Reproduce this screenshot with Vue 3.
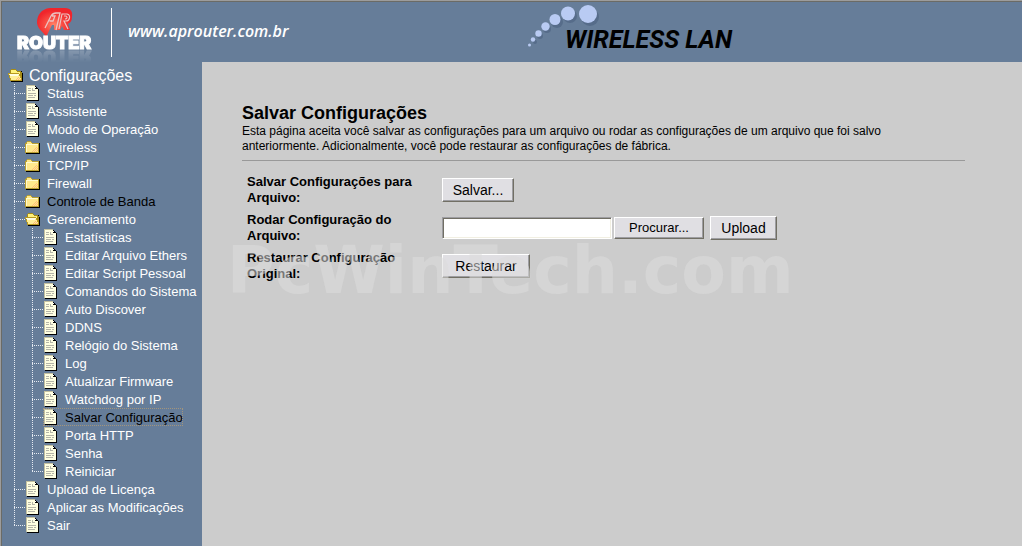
<script setup>
const children = [
  { label: 'Estatísticas' },
  { label: 'Editar Arquivo Ethers' },
  { label: 'Editar Script Pessoal' },
  { label: 'Comandos do Sistema' },
  { label: 'Auto Discover' },
  { label: 'DDNS' },
  { label: 'Relógio do Sistema' },
  { label: 'Log' },
  { label: 'Atualizar Firmware' },
  { label: 'Watchdog por IP' },
  { label: 'Salvar Configuração', current: true },
  { label: 'Porta HTTP' },
  { label: 'Senha' },
  { label: 'Reiniciar' },
]

const tree = [
  { label: 'Status', icon: 'doc' },
  { label: 'Assistente', icon: 'doc' },
  { label: 'Modo de Operação', icon: 'doc' },
  { label: 'Wireless', icon: 'folder' },
  { label: 'TCP/IP', icon: 'folder' },
  { label: 'Firewall', icon: 'folder' },
  { label: 'Controle de Banda', icon: 'folder', dark: true },
  { label: 'Gerenciamento', icon: 'open', children },
  { label: 'Upload de Licença', icon: 'doc' },
  { label: 'Aplicar as Modificações', icon: 'doc' },
  { label: 'Sair', icon: 'doc' },
]
</script>

<template>
  <div class="page">
    <svg class="defs" aria-hidden="true">
      <symbol id="doc" viewBox="0 0 15 16" shape-rendering="crispEdges">
        <path d="M2 1h9v1h1v1h1v1h1v12H2z" fill="#000" />
        <path d="M1 0h9v4h3v11H1z" fill="#ffffe1" />
        <path d="M1 0h9v1H2v14H1z" fill="#c4c1a0" />
        <path d="M10 1h1v1h1v1h1v1h-3z" fill="#000" />
        <path d="M10 2h1v1h-1z" fill="#fff" />
        <path d="M3 3h3v1H3zM3 5h3v1H3zM7 3h1v3H7zM8 5h2v1H8zM3 8h8v1H3zM3 10h5v1H3zM9 10h2v1H9zM3 12h7v1H3z" fill="#b5b5a8" />
      </symbol>
      <symbol id="folder" viewBox="0 0 15 13" shape-rendering="crispEdges">
        <path d="M2 2h13v11H1v-1h1z" fill="#000" />
        <path d="M1 1h1V0h4v1h1v1h7v10H0V2h1z" fill="#b99f31" />
        <path d="M2 1h4v1h1v1h6v8H1V3h1z" fill="#ffe98c" />
        <path d="M1 3h12v1H1zM1 3h1v8H1z" fill="#fffbcf" />
        <path d="M11 6h1v1h-1zM9 8h1v1H9zM11 8h1v1h-1zM7 10h1v1H7zM9 10h1v1H9zM11 10h1v1h-1zM10 7h1v1h-1zM12 7h1v1h-1zM8 9h1v1H8zM10 9h1v1h-1zM12 9h1v1h-1z" fill="#ffc07a" />
      </symbol>
      <symbol id="open" viewBox="0 0 15 13" shape-rendering="crispEdges">
        <path d="M3 2h11v2h1v9H3v-1h1z" fill="#000" />
        <path d="M2 1h1V0h5v1h1v1h4v1h1v9H3V9H2z" fill="#a58b18" />
        <path d="M3 1h5v1h1v1h3v2H3z" fill="#fff27c" />
        <path d="M0 4h11v1h1v2h1v2h1v3H2V9H1V6H0z" fill="#b89a20" />
        <path d="M1 5h10v2h1v2h1v2H3V9H2V6H1z" fill="#ffef98" />
        <path d="M1 5h10v1H1zM2 6h8v1H2z" fill="#fffde0" />
        <path d="M10 8h1v1h-1zM9 9h1v1H9zM11 9h1v1h-1zM8 10h1v1H8zM10 10h1v1h-1zM12 10h1v1h-1z" fill="#ffb978" />
      </symbol>
    </svg>

    <header class="banner">
      <a class="brand" href="#" aria-label="AP Router">
        <svg class="mark" viewBox="0 0 36 30" aria-hidden="true">
          <defs>
            <radialGradient id="glow" cx="48%" cy="58%" r="50%">
              <stop offset="0" stop-color="#ff8468" />
              <stop offset="0.5" stop-color="#f94c42" />
              <stop offset="1" stop-color="#f0252b" />
            </radialGradient>
          </defs>
          <path d="M9 29C7 24 1 22 0 15C0 7 4 1 13 0H28C34 0 36 4 35 9C35 13 33 15 31 16L33 22H27L25 18L23 22H17V17H15L12 23Z" fill="url(#glow)" />
          <path d="M8 20L14 8Q16 5 19 5H23L19 22M15 8L18 8L16 13H12.500" fill="none" stroke="#ecc3c2" stroke-width="1.300" />
          <path d="M22 21L25 6H30C34 7 33 13 29 13H27L31 21M27 8H29C31 9 30 11 28 11" fill="none" stroke="#ecc3c2" stroke-width="1.200" />
        </svg>
        <span class="wordmark">ROUTER</span>
      </a>
      <a class="site" href="#">www.aprouter.com.br</a>
      <div class="product">
        <svg class="bubbles" viewBox="0 0 80 52" aria-hidden="true">
          <g fill="#3f5474" opacity="0.4">
            <circle cx="63" cy="17" r="9" /><circle cx="43" cy="16" r="7" /><circle cx="30" cy="22" r="6" />
            <circle cx="20" cy="29" r="4" /><circle cx="13" cy="36" r="3" /><circle cx="8" cy="42" r="2" />
          </g>
          <g fill="#b9cbf3">
            <circle cx="61" cy="14" r="9" /><circle cx="41" cy="13.500" r="7" /><circle cx="28" cy="19.500" r="5.500" />
            <circle cx="18.500" cy="26.500" r="4.200" /><circle cx="11.500" cy="33.500" r="3.200" /><circle cx="6" cy="39.500" r="2.200" /><circle cx="2.500" cy="45" r="1.500" />
          </g>
        </svg>
        <span class="product-name">WIRELESS LAN</span>
      </div>
    </header>

    <div class="body">
      <nav class="side" aria-label="Configurações">
        <a class="root" href="#">
          <svg class="glyph" aria-hidden="true"><use href="#open" /></svg>Configurações
        </a>
        <ul class="tree">
          <li v-for="item in tree" :key="item.label">
            <a class="node" :class="{ dark: item.dark }" href="#">
              <svg class="glyph" :class="item.icon" aria-hidden="true"><use :href="'#' + item.icon" /></svg>
              <span>{{ item.label }}</span>
            </a>
            <ul v-if="item.children" class="tree nested">
              <li v-for="child in item.children" :key="child.label">
                <a class="node" :class="{ dark: child.current, current: child.current }" href="#">
                  <svg class="glyph doc" aria-hidden="true"><use href="#doc" /></svg>
                  <span>{{ child.label }}</span>
                </a>
              </li>
            </ul>
          </li>
        </ul>
      </nav>

      <main class="main">
        <h1>Salvar Configurações</h1>
        <p>Esta página aceita você salvar as configurações para um arquivo ou rodar as configurações de um arquivo que foi salvo anteriormente. Adicionalmente, você pode restaurar as configurações de fábrica.</p>
        <hr />
        <form class="actions" @submit.prevent>
          <div class="row">
            <span id="save-label" class="label">Salvar Configurações para Arquivo:</span>
            <button type="button" class="save" aria-describedby="save-label">Salvar...</button>
          </div>
          <div class="row">
            <label class="label" for="config-file">Rodar Configuração do Arquivo:</label>
            <div class="picker">
              <input id="config-file" type="text" />
              <button type="button" class="browse">Procurar...</button>
            </div>
            <button type="button" class="upload">Upload</button>
          </div>
          <div class="row">
            <span id="reset-label" class="label">Restaurar Configuração Original:</span>
            <button type="button" class="reset" aria-describedby="reset-label">Restaurar</button>
          </div>
        </form>
        <div class="watermark">PcWinTech.com</div>
      </main>
    </div>
  </div>
</template>

<style>
body {
  background: #ccc;
}
</style>

<style scoped>
.page {
  min-height: 100vh;
  box-sizing: border-box;
  display: flex;
  flex-direction: column;
  border-top: 1px solid #9c9c9c;
  border-left: 1px solid #9c9c9c;
  background: #ccc;
  color: #000;
  font-family: "Liberation Sans", Arial, sans-serif;
  font-size: 13px;
}
.defs {
  position: absolute;
  width: 0;
  height: 0;
}
a {
  color: #fff;
  text-decoration: none;
}
.banner {
  display: flex;
  align-items: flex-start;
  height: 60px;
  border-top: 1px solid #6b6b66;
  border-left: 1px solid #6b6b66;
  background: #667d99;
}
.brand {
  display: flex;
  flex-direction: column;
  width: 94px;
  height: 49px;
  margin-top: 6px;
  padding-left: 15px;
  border-right: 1px solid #fff;
}
.mark {
  width: 36px;
  height: 30px;
  margin-left: 20px;
}
.wordmark {
  margin-top: -4px;
  height: 18px;
  font: 900 18px/18px Inter, "Liberation Sans", sans-serif;
  -webkit-text-stroke: 1px #fff;
  -webkit-box-reflect: below -4px linear-gradient(transparent 20%, rgba(255, 255, 255, 0.25));
}
.site {
  margin: 18px 0 0 16px;
  width: 162px;
  font: italic 600 16px/22px "Open Sans", sans-serif;
  white-space: nowrap;
}
.product {
  display: flex;
  align-items: flex-start;
  margin-left: 237px;
}
.bubbles {
  width: 80px;
  height: 52px;
  margin-top: -2px;
}
.product-name {
  margin: 24px 0 0 -42px;
  z-index: 1;
  color: #000;
  font: italic 700 25px/28px Roboto, sans-serif;
  white-space: nowrap;
}
.body {
  flex: 1;
  display: flex;
}
.side {
  flex: none;
  width: 201px;
  box-sizing: border-box;
  border-left: 1px solid #6b6b66;
  padding-top: 5px;
  background: #667d99;
}
.root {
  display: flex;
  align-items: center;
  gap: 6px;
  height: 17px;
  padding-left: 6px;
  font-size: 16px;
}
.glyph {
  flex: none;
  width: 15px;
  height: 13px;
}
.glyph.doc {
  height: 16px;
}
.tree {
  list-style: none;
  margin: 0 0 0 12px;
  padding: 0;
}
.tree.nested {
  margin-left: 18px;
}
.tree li {
  background-image:
    repeating-linear-gradient(to bottom, #e6ebf2 0 1px, transparent 1px 2px),
    repeating-linear-gradient(to right, #e6ebf2 0 1px, transparent 1px 2px);
  background-repeat: no-repeat;
  background-size: 1px 100%, 11px 1px;
  background-position: 0 0, 0 9px;
}
.tree li:last-child {
  background-size: 1px 10px, 11px 1px;
}
.node {
  display: flex;
  align-items: center;
  gap: 7px;
  width: max-content;
  height: 18px;
  margin-left: 11px;
  white-space: nowrap;
}
.dark {
  color: #000;
}
.current {
  outline: 1px dotted #a3957c;
  outline-offset: -1px;
}
.main {
  flex: 1;
  min-width: 0;
  position: relative;
  padding: 41px 57px 40px 40px;
}
h1 {
  margin: 0;
  font-size: 18px;
  line-height: 21px;
}
p {
  max-width: 660px;
  margin: 0;
  font-size: 12px;
  line-height: 15px;
}
hr {
  margin: 6px 0 10px;
  border: 0;
  border-top: 1px solid #999;
}
.row {
  display: flex;
  align-items: center;
  height: 38px;
}
.label {
  width: 175px;
  margin: 0 20px 0 5px;
  font-weight: 700;
  line-height: 16px;
}
.picker {
  display: flex;
  gap: 2px;
  margin-right: 6px;
}
button {
  height: 24px;
  padding: 0;
  border: 1px solid;
  border-color: #fff #716f64 #716f64 #fff;
  border-radius: 0;
  box-shadow: inset -1px -1px #9d9da1;
  background: #e0dfe3;
  color: #000;
  font: 14px/20px "Liberation Sans", Arial, sans-serif;
}
.save {
  width: 72px;
}
.reset {
  width: 88px;
}
.upload {
  width: 67px;
}
.browse {
  width: 90px;
  height: 22px;
  font-size: 13px;
}
input {
  width: 170px;
  height: 22px;
  box-sizing: border-box;
  padding: 0 3px;
  border: 1px solid;
  border-color: #9d9da1 #fff #fff #9d9da1;
  box-shadow: inset 1px 1px #716f64, inset -1px -1px #f1efe2;
  background: #fff;
  font: 13px "Liberation Sans", Arial, sans-serif;
}
.watermark {
  position: absolute;
  top: 171px;
  left: 25px;
  color: rgba(219, 219, 219, 0.54);
  font: 700 65px/76px "DejaVu Sans", sans-serif;
  white-space: nowrap;
  pointer-events: none;
}
</style>
